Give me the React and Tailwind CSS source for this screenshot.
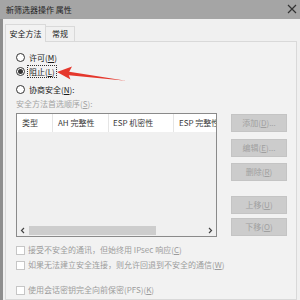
import React from "react";

const font = { fontFamily: '"Noto Sans CJK SC", "Noto Sans", sans-serif' };

function Radio({ checked, label, keyChar, suffix = "", focused = false }) {
  return (
    <div className="flex h-[14px] items-center">
      <span className="flex h-[9px] w-[9px] items-center justify-center rounded-full border border-[#333] bg-white">
        {checked && <span className="h-[5px] w-[5px] rounded-full bg-[#333]" />}
      </span>
      <span
        className={`ml-[2px] leading-[11px] text-[#1a1a1a] ${
          focused ? "border border-dotted border-[#333] px-[1px]" : "border border-transparent px-[1px]"
        }`}
      >
        {label}(<u>{keyChar}</u>){suffix}
      </span>
    </div>
  );
}

function Check({ children, className = "" }) {
  return (
    <div className={`flex h-[14px] items-center ${className}`}>
      <span className="h-[9px] w-[9px] border border-[#c6c6c6] bg-white" />
      <span className="ml-[3px] whitespace-nowrap text-[#9c9c9c]">{children}</span>
    </div>
  );
}

function Btn({ label, keyChar, dots = false, className = "" }) {
  return (
    <div
      className={`flex h-[18px] w-[56px] items-center justify-center border border-[#c4c4c4] bg-[#cccccc] text-[#a0a0a0] ${className}`}
    >
      {label}(<u>{keyChar}</u>){dots ? "..." : ""}
    </div>
  );
}

export default function App() {
  return (
    <div className="relative flex h-[300px] w-[300px] flex-col overflow-hidden bg-[#f0f0f0] text-[8px]" style={font}>
      {/* Title bar */}
      <div className="flex h-[19px] shrink-0 items-center justify-between bg-[#a5a5a5] pl-[6px] pr-[3px]">
        <span className="text-[#1e1e1e]">新筛选器操作 属性</span>
        <svg width="10" height="10" viewBox="0 0 10 10" className="mb-[2px]">
          <path d="M1 1 L9 9 M9 1 L1 9" stroke="#333" strokeWidth="1.2" />
        </svg>
      </div>

      <div className="flex flex-1">
        <div className="w-[3px] shrink-0 bg-[#8e8e8e]" />
        <div className="flex flex-1 flex-col pl-[2px] pt-[5px]">
          {/* Tabs */}
          <div className="flex h-[17px] items-end">
            <div className="relative z-10 -mb-px flex h-[18px] w-[41px] items-center justify-center border border-b-0 border-[#d9d9d9] bg-[#f2f2f2] text-[#1a1a1a]">
              安全方法
            </div>
            <div className="flex h-[15px] w-[29px] items-center justify-center border border-b-0 border-l-0 border-[#d9d9d9] bg-[#f0f0f0] text-[#1a1a1a]">
              常规
            </div>
          </div>

          {/* Panel */}
          <div className="flex w-[292px] flex-1 flex-col border border-[#d9d9d9] bg-[#f2f2f2] pl-[10px]">
            <div className="mt-[8px]">
              <Radio label="许可" keyChar="M" />
              <Radio label="阻止" keyChar="L" checked focused />
              <div className="mt-[4px]">
                <Radio label="协商安全" keyChar="N" suffix=":" />
              </div>
            </div>
            <div className="mt-[1px] flex h-[14px] items-center text-[#a4a4a4]">
              安全方法首选顺序(<u>S</u>):
            </div>

            <div className="mt-[2px] flex">
              {/* List */}
              <div className="flex h-[124px] w-[201px] flex-col overflow-hidden border border-[#8a8a8a] bg-[#f0f0f0]">
                <div className="flex h-[18px] shrink-0 bg-white text-[#3a3a3a]">
                  <div className="flex w-[36px] shrink-0 items-center border-r border-[#e5e5e5] pl-[5px]">类型</div>
                  <div className="flex w-[56px] shrink-0 items-center border-r border-[#e5e5e5] pl-[5px]">AH 完整性</div>
                  <div className="flex w-[65px] shrink-0 items-center border-r border-[#e5e5e5] pl-[4px]">ESP 机密性</div>
                  <div className="flex w-[65px] shrink-0 items-center pl-[5px] whitespace-nowrap">ESP 完整性</div>
                </div>
                <div className="flex-1" />
                <div className="flex h-[11px] shrink-0 items-center bg-[#f0f0f0]">
                  <svg width="12" height="11" viewBox="0 0 12 11">
                    <path d="M7 3 L4.5 5.5 L7 8" stroke="#444" strokeWidth="1.2" fill="none" />
                  </svg>
                  <div className="h-[9px] w-[127px] bg-[#cdcdcd]" />
                  <div className="flex-1" />
                  <svg width="12" height="11" viewBox="0 0 12 11">
                    <path d="M5 3 L7.5 5.5 L5 8" stroke="#444" strokeWidth="1.2" fill="none" />
                  </svg>
                </div>
              </div>

              {/* Buttons */}
              <div className="ml-[14px] flex flex-col">
                <Btn label="添加" keyChar="D" dots className="mt-[1px]" />
                <Btn label="编辑" keyChar="E" dots className="mt-[7px]" />
                <Btn label="删除" keyChar="R" className="mt-[6px]" />
                <Btn label="上移" keyChar="U" className="mt-[15px]" />
                <Btn label="下移" keyChar="O" className="mt-[4px]" />
              </div>
            </div>

            <Check className="mt-[6px]">接受不安全的通讯，但始终用 IPsec 响应(<u>C</u>)</Check>
            <Check className="mt-[1px]">如果无法建立安全连接，则允许回退到不安全的通信(<u>W</u>)</Check>
            <Check className="mt-[11px]">使用会话密钥完全向前保密(PFS)(<u>K</u>)</Check>
          </div>
        </div>
      </div>

      {/* Red annotation arrow */}
      <svg className="pointer-events-none absolute left-0 top-0" width="300" height="300" viewBox="0 0 300 300">
        <polygon
          points="57,72 72,66.5 69.2,71.8 126,80.8 68.8,75.2 70.5,79.5"
          fill="#e5372c"
        />
      </svg>
    </div>
  );
}
